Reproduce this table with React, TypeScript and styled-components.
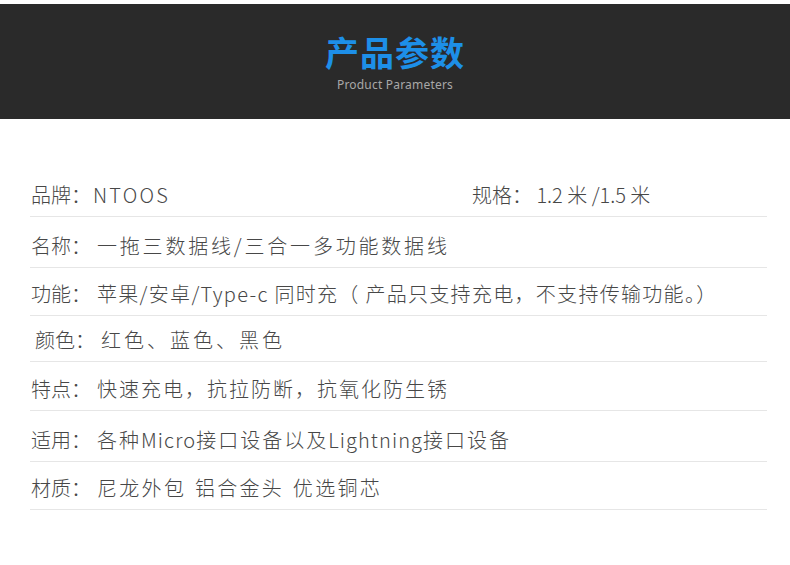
import styled, { createGlobalStyle } from "styled-components";

const GlobalStyle = createGlobalStyle`
    html, body {
        margin: 0;
        padding: 0;
        background: #ffffff;
    }
    body {
        font-family: "Noto Sans CJK SC", "Noto Sans", sans-serif;
    }
`

const Page = styled.div`
    width: 790px;
    height: 565px;
    overflow: hidden;
    background: #ffffff;
`

const Header = styled.header`
    margin-top: 4px;
    height: 115px;
    background: #2a2a2a;
    display: flex;
    flex-direction: column;
    align-items: center;
    padding-top: 30px;
    box-sizing: border-box;
`

const Title = styled.h1`
    margin: 0;
    font-size: 34px;
    line-height: 36px;
    font-weight: 700;
    color: #1d8fe8;
    letter-spacing: 1px;
`

const SubTitle = styled.div`
    margin-top: 8px;
    font-family: "Noto Sans", "Open Sans", sans-serif;
    font-size: 12px;
    line-height: 14px;
    color: #a8a8a8;
    letter-spacing: 0.2px;
`

const Table = styled.section`
    display: flex;
    flex-direction: column;
    padding: 49px 23px 0 30px;
`

const Row = styled.div<{ $h: number }>`
    height: ${p => p.$h}px;
    display: flex;
    align-items: flex-end;
    padding-bottom: 10px;
    box-sizing: border-box;
    border-bottom: 1px solid #e6e6e6;
`

const Cell = styled.div<{ $w?: number; $indent?: number }>`
    ${p => p.$w ? `width: ${p.$w}px; flex: none;` : "flex: 1;"}
    padding-left: ${p => p.$indent ?? 1}px;
    box-sizing: border-box;
    display: flex;
    align-items: baseline;
    white-space: nowrap;
    font-size: 20px;
    line-height: 22px;
    font-weight: 300;
    color: #474747;
`

const Label = styled.span`
    flex: none;
`

const Value = styled.span<{ $gap?: number; $shift?: number; $word?: number }>`
    margin-left: ${p => p.$shift ?? 6}px;
    letter-spacing: ${p => p.$gap ?? 2.3}px;
    word-spacing: ${p => p.$word ?? 0}px;
`

const Latin = styled.span`
    letter-spacing: 1.1px;
`

const rows = [
    { label: "名称：", value: "一拖三数据线/三合一多功能数据线", h: 51, gap: 2.8 },
    { label: "功能：", value: "苹果/安卓/Type-c 同时充（ 产品只支持充电，不支持传输功能。）", h: 48, gap: 1.3 },
    { label: "颜色：", value: "红色、蓝色、黑色", h: 46, indent: 5, gap: 3 },
    { label: "特点：", value: "快速充电，抗拉防断，抗氧化防生锈", h: 49, gap: 2 },
]

function App() {
    return (
        <Page>
            <GlobalStyle />
            <Header>
                <Title>产品参数</Title>
                <SubTitle>Product Parameters</SubTitle>
            </Header>
            <Table>
                <Row $h={49}>
                    <Cell $w={441}>
                        <Label>品牌：</Label>
                        <Value $gap={2.2} $shift={2}>NTOOS</Value>
                    </Cell>
                    <Cell>
                        <Label>规格：</Label>
                        <Value $gap={0} $shift={0}>&nbsp;1.2 米 /1.5 米</Value>
                    </Cell>
                </Row>
                {rows.map(r => (
                    <Row key={r.label} $h={r.h}>
                        <Cell $indent={r.indent}>
                            <Label>{r.label}</Label>
                            <Value $gap={r.gap}>{r.value}</Value>
                        </Cell>
                    </Row>
                ))}
                <Row $h={51}>
                    <Cell>
                        <Label>适用：</Label>
                        <Value $gap={2}>
                            各种<Latin>Micro</Latin>接口设备以及<Latin>Lightning</Latin>接口设备
                        </Value>
                    </Cell>
                </Row>
                <Row $h={48}>
                    <Cell>
                        <Label>材质：</Label>
                        <Value $gap={2.3} $word={2}>尼龙外包 铝合金头 优选铜芯</Value>
                    </Cell>
                </Row>
            </Table>
        </Page>
    );
}

export default App;
